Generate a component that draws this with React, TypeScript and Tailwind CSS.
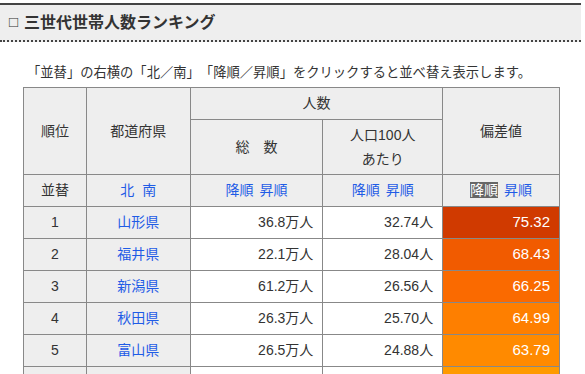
import React from 'react';

const rows = [
  { rank: '1', pref: '山形県', total: '36.8万人', per: '32.74人', dev: '75.32', color: '#d03a00' },
  { rank: '2', pref: '福井県', total: '22.1万人', per: '28.04人', dev: '68.43', color: '#f15b00' },
  { rank: '3', pref: '新潟県', total: '61.2万人', per: '26.56人', dev: '66.25', color: '#fa6a00' },
  { rank: '4', pref: '秋田県', total: '26.3万人', per: '25.70人', dev: '64.99', color: '#fe7f00' },
  { rank: '5', pref: '富山県', total: '26.5万人', per: '24.88人', dev: '63.79', color: '#ff8a00' },
  // next row only peeks in at the bottom edge
  { rank: '', pref: '', total: '', per: '', dev: '', color: '#ff9a00' },
];

const cell = 'border border-[#888] text-center';

function Sort({ a, b, active }: { a: string; b: string; active?: boolean }) {
  return (
    <span className="text-[#1f5ce6]">
      <span className={active ? 'bg-[#666] text-white' : ''}>{a}</span>
      <span className="ml-[6px]">{b}</span>
    </span>
  );
}

export default function App() {
  return (
    <div
      className="w-[585px] h-[374px] overflow-hidden bg-white text-[#333] [text-spacing-trim:space-all]"
      style={{ fontFamily: '"Liberation Sans", "Noto Sans CJK JP", sans-serif' }}
    >
      <div className="pt-[3px] pr-[4px]">
        <div
          className="h-[39px] bg-[#eee] border-t-2 border-b-2 border-[#444] flex items-center pl-[9px] text-[16px] font-bold text-[#333]"
          style={{ borderTopStyle: 'solid', borderBottomStyle: 'dotted' }}
        >
          <span className="font-normal mr-[6px] text-[15px]">□</span>
          三世代世帯人数ランキング
        </div>
      </div>

      <p className="mt-[22px] ml-[27px] text-[13.3px] leading-[18px] whitespace-nowrap">
        「並替」の右横の「北／南」「降順／昇順」をクリックすると並べ替え表示します。
      </p>

      <table className="ml-[23px] mt-[5px] border-collapse text-[14px] w-[537px]">
        <colgroup>
          <col className="w-[63px]" />
          <col className="w-[104px]" />
          <col className="w-[133px]" />
          <col className="w-[120px]" />
          <col className="w-[117px]" />
        </colgroup>
        <thead>
          <tr className="h-[32px] bg-[#eee]">
            <th rowSpan={2} className={`${cell} font-normal`}>順位</th>
            <th rowSpan={2} className={`${cell} font-normal`}>都道府県</th>
            <th colSpan={2} className={`${cell} font-normal`}>人数</th>
            <th rowSpan={2} className={`${cell} font-normal`}>偏差値</th>
          </tr>
          <tr className="h-[55px] bg-[#eee]">
            <th className={`${cell} font-normal`}>総　数</th>
            <th className={`${cell} font-normal leading-[24px]`}>
              人口100人<br />あたり
            </th>
          </tr>
          <tr className="h-[32px] bg-[#eee]">
            <th className={`${cell} font-normal`}>並替</th>
            <th className={`${cell} font-normal`}>
              <span className="text-[#1f5ce6]">北<span className="ml-[8px]">南</span></span>
            </th>
            <th className={`${cell} font-normal`}><Sort a="降順" b="昇順" /></th>
            <th className={`${cell} font-normal`}><Sort a="降順" b="昇順" /></th>
            <th className={`${cell} font-normal`}><Sort a="降順" b="昇順" active /></th>
          </tr>
        </thead>
        <tbody>
          {rows.map((r, i) => (
            <tr key={i} className="h-[32px]">
              <td className={`${cell} bg-[#eee]`}>{r.rank}</td>
              <td className={`${cell} bg-[#eee] text-[#1f5ce6]`}>{r.pref}</td>
              <td className="border border-[#888] text-right pr-[9px]">{r.total}</td>
              <td className="border border-[#888] text-right pr-[9px]">{r.per}</td>
              <td
                className="border border-[#888] text-right pr-[9px] text-white text-[15px]"
                style={{ backgroundColor: r.color }}
              >
                {r.dev}
              </td>
            </tr>
          ))}
        </tbody>
      </table>
    </div>
  );
}
